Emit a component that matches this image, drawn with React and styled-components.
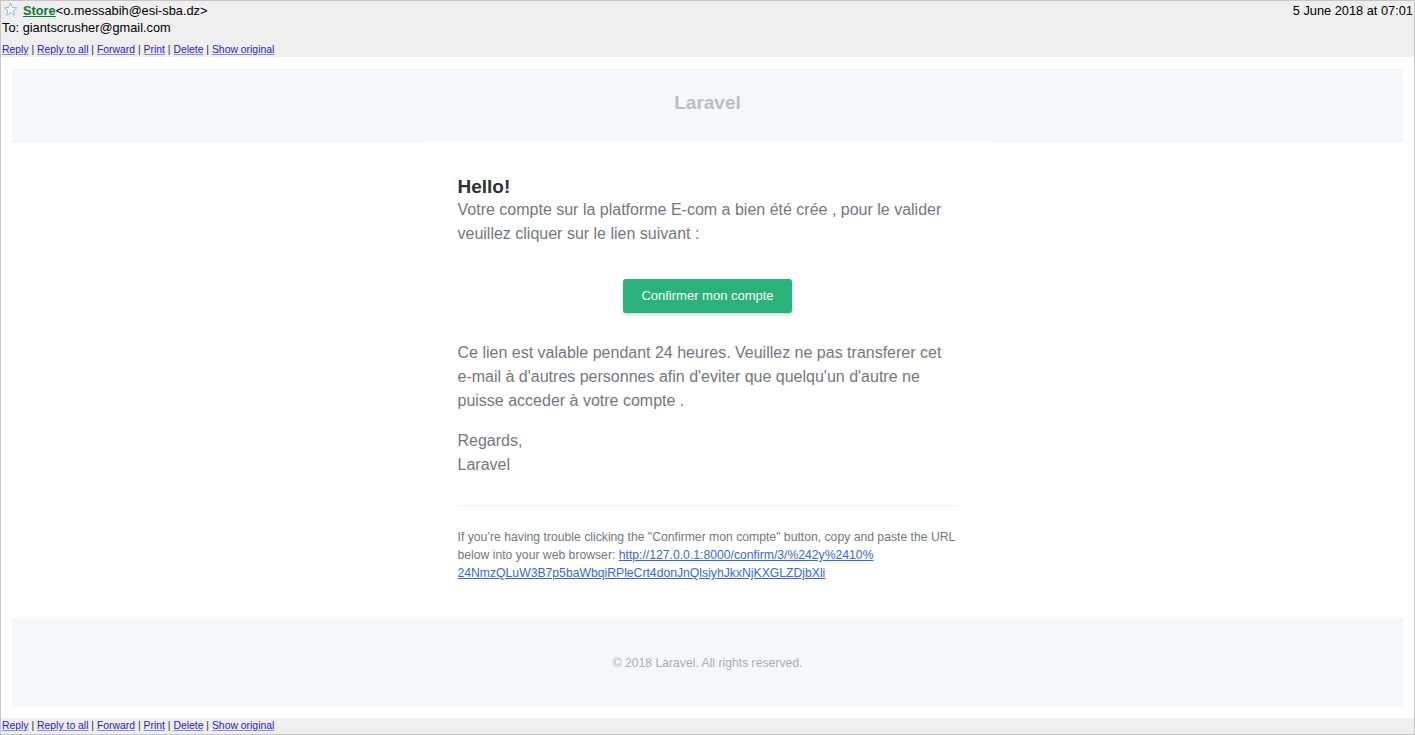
import React from 'react';
import styled, { createGlobalStyle } from 'styled-components';

const GlobalStyle = createGlobalStyle`
  html, body {
    margin: 0;
    padding: 0;
    background: #ffffff;
  }
  body {
    font-family: "Liberation Sans", Arial, sans-serif;
  }
`;

const Page = styled.div`
  border: 1px solid #c6c6c6;
  background: #ffffff;
  color: #000;
`;

const MailHeader = styled.div`
  background: #efefef;
  padding: 1px 1px 0 1px;
  font-size: 12.8px;
`;

const HeaderRow = styled.div`
  display: flex;
  justify-content: space-between;
  align-items: center;
  line-height: 17px;
`;

const From = styled.div`
  display: flex;
  align-items: center;
`;

const StarIcon = styled.svg`
  width: 15px;
  height: 15px;
  margin: -2px 5px 0 1px;
`;

const Sender = styled.a`
  color: #0b7a2c;
  font-weight: bold;
  text-decoration: underline;
`;

const DateText = styled.span`
  color: #000;
`;

const Actions = styled.div`
  font-size: 10.4px;
  line-height: 14px;
  margin-top: ${({ $top }) => $top || 0}px;
  color: #333;
`;

const ActionLink = styled.a`
  color: #2323c8;
  text-decoration: underline;
  text-decoration-color: #8a8ae8;
`;

const BottomBar = styled.div`
  background: #efefef;
  padding: 1px;
`;

const Wrapper = styled.div`
  margin: 11px;
  background: #f5f8fa;
  font-family: "Liberation Sans", Helvetica, Arial, sans-serif;
`;

const Brand = styled.div`
  padding: 23px 0 27px;
  text-align: center;
  font-size: 19px;
  line-height: 23px;
  font-weight: bold;
  color: #bbbfc3;
`;

const Body = styled.div`
  background: #ffffff;
  border-top: 1px solid #edeff2;
  border-bottom: 1px solid #edeff2;
`;

const InnerBody = styled.div`
  width: 570px;
  box-sizing: border-box;
  margin: -1px auto 0;
  padding: 35px 35px 37px;
  background: #ffffff;
`;

const Heading = styled.h1`
  margin: 0;
  font-size: 19px;
  line-height: 22px;
  font-weight: bold;
  color: #2f3133;
`;

const Para = styled.p`
  margin: 0 0 16px;
  font-size: 16px;
  line-height: 24px;
  color: #74787e;
`;

const Action = styled.div`
  display: flex;
  justify-content: center;
  margin: 33px 0 28px;
`;

const Button = styled.a`
  display: inline-block;
  background: #2ab27b;
  color: #ffffff;
  font-size: 13px;
  line-height: 16px;
  padding: 9px 18px;
  border-radius: 3px;
  text-decoration: none;
  box-shadow: 0 2px 3px rgba(0, 0, 0, 0.16);
`;

const Subcopy = styled.div`
  margin-top: 28px;
  padding-top: 22px;
  border-top: 1px solid #edeff2;
`;

const SmallText = styled.p`
  margin: 0;
  font-size: 12.2px;
  line-height: 18px;
  color: #74787e;
`;

const UrlLink = styled.a`
  color: #3869d4;
  text-decoration: underline;
`;

const Footer = styled.div`
  padding: 34px 0 35px;
  text-align: center;
  font-size: 12.2px;
  line-height: 18px;
  color: #aeaeae;
`;

const actions = ['Reply', 'Reply to all', 'Forward', 'Print', 'Delete', 'Show original'];

const ActionRow = ({ top }) => (
  <Actions $top={top}>
    {actions.map((a, i) => (
      <React.Fragment key={a}>
        {i > 0 && ' | '}
        <ActionLink href="#">{a}</ActionLink>
      </React.Fragment>
    ))}
  </Actions>
);

const App = () => {
  return (
    <>
      <GlobalStyle />
      <Page>
        <MailHeader>
          <HeaderRow>
            <From>
              <StarIcon viewBox="0 0 24 24">
                <polygon
                  points="12,2 14.9,8.6 22,9.3 16.6,14 18.2,21 12,17.3 5.8,21 7.4,14 2,9.3 9.1,8.6"
                  fill="#f7faff"
                  stroke="#8aaee6"
                  strokeWidth="1.4"
                  strokeLinejoin="round"
                />
              </StarIcon>
              <Sender href="#">Store</Sender>
              <span>&lt;o.messabih@esi-sba.dz&gt;</span>
            </From>
            <DateText>5 June 2018 at 07:01</DateText>
          </HeaderRow>
          <HeaderRow>To: giantscrusher@gmail.com</HeaderRow>
          <ActionRow top={7} />
        </MailHeader>

        <Wrapper>
          <Brand>Laravel</Brand>
          <Body>
            <InnerBody>
              <Heading>Hello!</Heading>
              <Para>
                Votre compte sur la platforme E-com a bien été crée , pour le valider veuillez
                cliquer sur le lien suivant :
              </Para>
              <Action>
                <Button href="#">Confirmer mon compte</Button>
              </Action>
              <Para>
                Ce lien est valable pendant 24 heures. Veuillez ne pas transferer cet e-mail à
                d'autres personnes afin d'eviter que quelqu'un d'autre ne puisse acceder à votre
                compte .
              </Para>
              <Para>
                Regards,
                <br />
                Laravel
              </Para>
              <Subcopy>
                <SmallText>
                  If you’re having trouble clicking the "Confirmer mon compte" button, copy and
                  paste the URL below into your web browser:{' '}
                  <UrlLink href="#">
                    http://127.0.0.1:8000/confirm/3/%242y%2410%<wbr />24NmzQLuW3B7p5baWbqiRPleCrt4donJnQlsiyhJkxNjKXGLZDjbXli
                  </UrlLink>
                </SmallText>
              </Subcopy>
            </InnerBody>
          </Body>
          <Footer>© 2018 Laravel. All rights reserved.</Footer>
        </Wrapper>

        <BottomBar>
          <ActionRow />
        </BottomBar>
      </Page>
    </>
  );
};

export default App;
